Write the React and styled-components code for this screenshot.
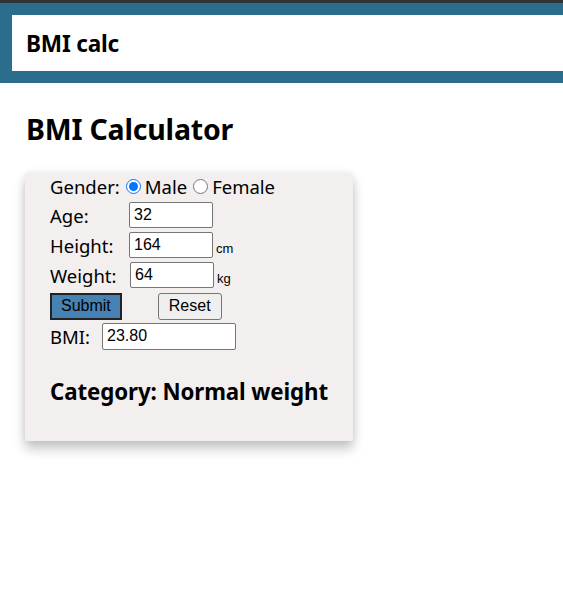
import React from "react";
import styled, { createGlobalStyle } from "styled-components";

const Global = createGlobalStyle`
  html, body { margin: 0; padding: 0; background: #fff; }
  body { font-family: "Noto Sans", "Open Sans", sans-serif; color: #000; }
`;

const Page = styled.div`
  border-top: 3px solid #333;
  min-height: 100vh;
  box-sizing: border-box;
`;

const Header = styled.header`
  background: #fff;
  border: 12px solid #2b6d8c;
  border-right: none;
  height: 56px;
  display: flex;
  align-items: center;
  padding-left: 14px;
`;

const Brand = styled.h3`
  margin: 0;
  font-size: 22.6px;
  font-weight: 700;
  letter-spacing: -0.2px;
`;

const Main = styled.main`
  padding: 0 25px 40px;
`;

const Title = styled.h1`
  margin: 27px 0 25px 1px;
  font-size: 28.5px;
  font-weight: 700;
  letter-spacing: -0.2px;
`;

const Card = styled.form`
  width: 303px;
  background: #f2efee;
  padding: 0 0 34px 25px;
  box-shadow: 0 8px 12px rgba(0, 0, 0, 0.22), 0 0 8px rgba(0, 0, 0, 0.08);
  border-radius: 2px;
`;

const Row = styled.div`
  display: flex;
  align-items: center;
  height: ${(p) => p.h || 30}px;
  font-size: 18.5px;
  white-space: nowrap;
`;

const Label = styled.span`
  display: inline-block;
  width: ${(p) => p.w}px;
`;

const Radio = styled.input.attrs({ type: "radio" })`
  margin: 0 4px 0 6px;
  width: 15px;
  height: 15px;
  accent-color: #0075ff;
`;

const Field = styled.input`
  box-sizing: border-box;
  width: ${(p) => p.w}px;
  height: ${(p) => p.h || 26}px;
  font-family: "Liberation Sans", Arial, sans-serif;
  font-size: 16px;
  padding: 1px 4px;
  border: 1px solid #767676;
  border-radius: 2px;
  background: #fff;
  color: #000;
`;

const Unit = styled.span`
  font-family: "Liberation Sans", Arial, sans-serif;
  font-size: 13px;
  margin: 6px 0 0 3px;
`;

const Button = styled.button`
  box-sizing: border-box;
  height: 27px;
  font-family: "Liberation Sans", Arial, sans-serif;
  font-size: 16px;
  padding: 0 ${(p) => (p.primary ? 9 : 10)}px;
  color: #000;
  background: ${(p) => (p.primary ? "#4682b4" : "#efefef")};
  border: ${(p) => (p.primary ? "2px solid #222" : "1px solid #767676")};
  border-radius: ${(p) => (p.primary ? 0 : 3)}px;
  margin-left: ${(p) => p.ml || 0}px;
`;

const Category = styled.h3`
  margin: 26px 0 0 0;
  font-size: 22.3px;
  font-weight: 700;
  letter-spacing: -0.1px;
`;

export default function App() {
  return (
    <>
      <Global />
      <Page>
        <Header>
          <Brand>BMI calc</Brand>
        </Header>
        <Main>
          <Title>BMI Calculator</Title>
          <Card onSubmit={(e) => e.preventDefault()}>
            <Row h={27}>
              Gender:
              <Radio name="g" defaultChecked />
              Male
              <Radio name="g" />
              Female
            </Row>
            <Row>
              <Label w={79}>Age:</Label>
              <Field w={84} defaultValue="32" />
            </Row>
            <Row>
              <Label w={79}>Height:</Label>
              <Field w={84} defaultValue="164" />
              <Unit>cm</Unit>
            </Row>
            <Row>
              <Label w={80}>Weight:</Label>
              <Field w={84} defaultValue="64" />
              <Unit>kg</Unit>
            </Row>
            <Row h={32}>
              <Button primary type="submit">Submit</Button>
              <Button ml={36} type="button">Reset</Button>
            </Row>
            <Row h={28}>
              <Label w={52}>BMI:</Label>
              <Field w={134} h={27} defaultValue="23.80" />
            </Row>
            <Category>Category: Normal weight</Category>
          </Card>
        </Main>
      </Page>
    </>
  );
}
